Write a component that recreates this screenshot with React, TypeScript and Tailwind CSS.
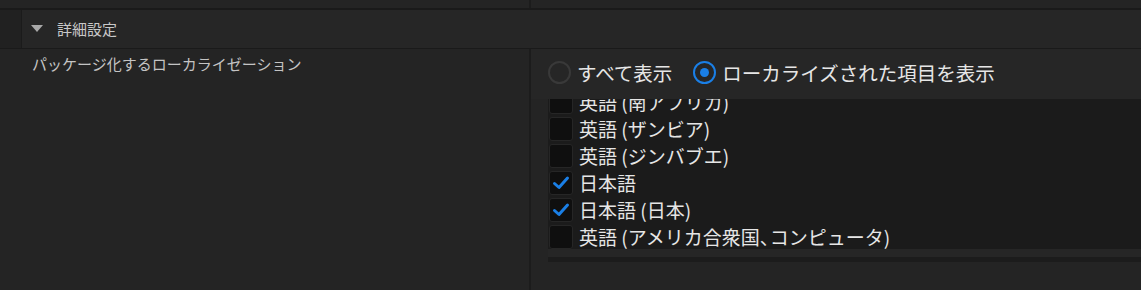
import React from 'react';

const font = { fontFamily: '"Noto Sans CJK JP", "Noto Sans", sans-serif' };

const items = [
  { label: '英語 (南アフリカ)', checked: false },
  { label: '英語 (ザンビア)', checked: false },
  { label: '英語 (ジンバブエ)', checked: false },
  { label: '日本語', checked: true },
  { label: '日本語 (日本)', checked: true },
  { label: '英語 (アメリカ合衆国、コンピュータ)', checked: false },
];

const Radio: React.FC<{ selected?: boolean; label: string }> = ({ selected, label }) => (
  <div className="flex items-center gap-[6px]">
    {selected ? (
      <span className="w-[23px] h-[23px] rounded-full border-2 border-[#1a7fe6] flex items-center justify-center">
        <span className="w-[9px] h-[9px] rounded-full bg-[#1a7fe6]" />
      </span>
    ) : (
      <span className="w-[23px] h-[23px] rounded-full border-2 border-[#393939]" />
    )}
    <span className="text-[19.5px] text-[#e6e6e6] leading-none">{label}</span>
  </div>
);

const Check: React.FC<{ checked: boolean }> = ({ checked }) => (
  <span className="w-[24px] h-[24px] rounded-[3px] bg-[#0f0f0f] border border-[#262626] flex items-center justify-center">
    {checked && (
      <svg width="20" height="20" viewBox="0 0 20 20" fill="none">
        <path d="M3.5 10.5 L8 14.5 L16.5 5" stroke="#1a7fe6" strokeWidth="3" strokeLinecap="round" strokeLinejoin="round" />
      </svg>
    )}
  </span>
);

export default function App() {
  return (
    <div className="w-[1141px] h-[290px] bg-[#242424] overflow-hidden flex flex-col" style={font}>
      <div className="h-[8px] flex">
        <div className="w-[531px] border-r-2 border-[#1c1c1c]" />
      </div>
      <div className="h-[2px] bg-[#1a1a1a]" />
      <div className="h-[39px] flex border-b border-[#1a1a1a]">
        <div className="w-[22px] bg-[#212121] border-r border-[#1b1b1b]" />
        <div className="flex-1 bg-[#262626] flex items-center pl-[9px] gap-[14px]">
          <svg width="12" height="8" viewBox="0 0 12 8">
            <path d="M0 0 H12 L6 7 Z" fill="#a8a8a8" />
          </svg>
          <span className="text-[15px] text-[#c8c8c8]">詳細設定</span>
        </div>
      </div>
      <div className="flex flex-1">
        <div className="w-[531px] border-r-2 border-[#1c1c1c] pl-[32px] pt-[2px]">
          <span className="text-[15px] text-[#c4c4c4]">パッケージ化するローカライゼーション</span>
        </div>
        <div className="flex-1 flex flex-col">
          <div className="h-[50px] bg-[#262626] flex items-center gap-[21px] pl-[17px] pb-[3px]">
            <Radio label="すべて表示" />
            <Radio selected label="ローカライズされた項目を表示" />
          </div>
          <div className="ml-[17px] h-[150px] bg-[#1b1b1b] overflow-hidden">
            <div className="-mt-[11px] flex flex-col">
              {items.map((it) => (
                <div key={it.label} className="h-[27px] flex items-center gap-[6px] pl-[1px]">
                  <Check checked={it.checked} />
                  <span className="text-[19px] text-[#e6e6e6] leading-none">
                    {it.label.includes('、') ? (
                      <>
                        {it.label.split('、')[0]}
                        <span className="tracking-[-9px]">、</span>
                        {it.label.split('、')[1]}
                      </>
                    ) : (
                      it.label
                    )}
                  </span>
                </div>
              ))}
            </div>
          </div>
          <div className="ml-[17px] h-[8px] bg-[#262626]" />
          <div className="ml-[17px] h-[5px] bg-[#1c1c1c]" />
        </div>
      </div>
    </div>
  );
}
